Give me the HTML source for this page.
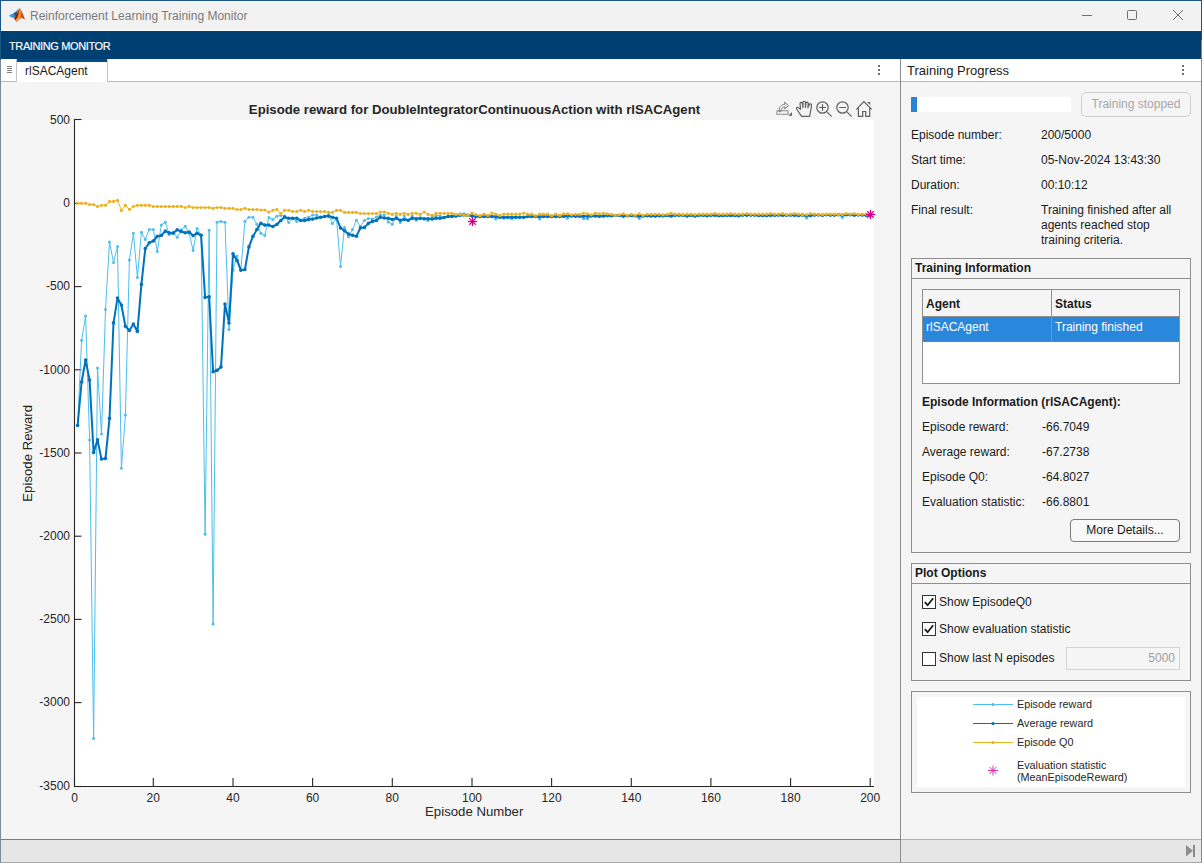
<!DOCTYPE html>
<html><head><meta charset="utf-8">
<style>
*{box-sizing:border-box;margin:0;padding:0}
html,body{width:1202px;height:863px;overflow:hidden;background:#f5f5f5;font-family:"Liberation Sans",sans-serif;color:#212121}
.a{position:absolute}
.plot{position:absolute;left:0;top:0}
.lbl{position:absolute;font-size:12px;line-height:14px;white-space:nowrap;color:#1a1a1a}
</style></head><body>
<!-- window frame -->
<div class="a" style="left:0;top:0;width:1202px;height:863px;background:#f5f5f5"></div>
<!-- title bar -->
<div class="a" style="left:0;top:0;width:1202px;height:31px;background:#f2f2f3"></div>
<div class="a" style="left:0;top:0;width:1202px;height:1px;background:#1b5789"></div>
<div class="a" style="left:0;top:30px;width:1202px;height:1px;background:#ffffff"></div>
<svg class="a" style="left:4px;top:2px" width="26" height="26" viewBox="0 0 26 26">
  <path d="M5 13.4 L10 11 L14.8 6.4 L12.5 12.5 L10.2 16.3 L7.2 15.2 Z" fill="#3a92dc"/>
  <path d="M10 11.2 L13.2 9.8 L12.6 13.6 L10.4 13.4 Z" fill="#1f4f80"/>
  <path d="M15.7 6 L18.5 11 L20.9 17.6 L17.6 15.8 L12.4 20 L10.2 16.4 L12.8 11.8 Z" fill="#c0401c"/>
  <path d="M13 11.5 L15.5 7.2 L14.5 13 L11.5 17.8 L10.3 16.3 Z" fill="#8c2412"/>
  <path d="M15.6 6.4 L17.6 9.5 L17 15.2 L12.6 19.6 L14.2 13 Z" fill="#e98a2a"/>
  <path d="M17 15.2 L12.4 20 L12 17.5 L14.5 15.5 Z" fill="#f3b030"/>
  <path d="M17.6 9.5 L20.9 17.6 L18.2 15.6 Z" fill="#d4502a"/>
</svg>
<div class="a" style="left:30px;top:9px;font-size:12px;line-height:15px;color:#7a7a7a;white-space:nowrap">Reinforcement Learning Training Monitor</div>
<!-- window controls -->
<div class="a" style="left:1082px;top:15px;width:10px;height:1px;background:#6f6f6f"></div>
<div class="a" style="left:1127px;top:10px;width:10px;height:10px;border:1px solid #6f6f6f;border-radius:1.5px"></div>
<svg class="a" style="left:1172px;top:9px" width="12" height="12" viewBox="0 0 12 12"><path d="M1 1 L11 11 M11 1 L1 11" stroke="#6f6f6f" stroke-width="1"/></svg>
<!-- toolstrip -->
<div class="a" style="left:0;top:31px;width:1202px;height:28px;background:#003f72"></div>
<div class="a" style="left:9px;top:39.5px;font-size:11px;line-height:13px;color:#ffffff;white-space:nowrap;letter-spacing:-0.38px;-webkit-text-stroke:0.15px #ffffff">TRAINING MONITOR</div>
<!-- left border -->
<div class="a" style="left:0;top:0;width:1px;height:863px;background:#7a8c9c"></div>
<div class="a" style="left:0;top:0;width:1px;height:60px;background:#1b5789"></div>
<div class="a" style="left:1201px;top:0;width:1px;height:863px;background:#7a8a98"></div>
<div class="a" style="left:1201px;top:0;width:1px;height:40px;background:#1b5789"></div>

<!-- left tab bar -->
<div class="a" style="left:1px;top:59px;width:899px;height:23px;background:#ffffff;border-bottom:1px solid #b9b9b9"></div>
<div class="a" style="left:1px;top:59px;width:16px;height:23px;background:#ffffff;border-right:1px solid #c4c4c4;border-bottom:1px solid #b9b9b9"></div>
<div class="a" style="left:7px;top:66px;width:5px;height:1px;background:#808080;box-shadow:0 2px 0 #808080,0 4px 0 #808080,0 6px 0 #808080"></div>
<div class="a" style="left:17px;top:59px;width:90px;height:23px;background:#ffffff;border-top:3px solid #004b8a"></div>
<div class="a" style="left:107px;top:59px;width:1px;height:22px;background:#c4c4c4"></div>
<div class="a" style="left:25px;top:64px;font-size:12px;line-height:14px;color:#1a1a1a;white-space:nowrap">rlSACAgent</div>
<div class="a" style="left:878px;top:65px;width:2px;height:2px;background:#6e6e6e;box-shadow:0 4px 0 #6e6e6e,0 8px 0 #6e6e6e"></div>

<!-- plot content bg -->
<div class="a" style="left:1px;top:82px;width:899px;height:757px;background:#f5f5f5"></div>
<svg class="plot" width="1202" height="863" viewBox="0 0 1202 863">
<rect x="74" y="120" width="800" height="667" fill="#ffffff"/>
<g stroke="#262626" stroke-width="1.1" fill="none">
<line x1="74.5" y1="119.5" x2="74.5" y2="786.5"/>
<line x1="74" y1="786.5" x2="874" y2="786.5"/>
<line x1="74" y1="119.5" x2="81.5" y2="119.5"/><line x1="74" y1="203.4" x2="81.5" y2="203.4"/><line x1="74" y1="286.6" x2="81.5" y2="286.6"/><line x1="74" y1="369.8" x2="81.5" y2="369.8"/><line x1="74" y1="453.0" x2="81.5" y2="453.0"/><line x1="74" y1="536.2" x2="81.5" y2="536.2"/><line x1="74" y1="619.4" x2="81.5" y2="619.4"/><line x1="74" y1="702.6" x2="81.5" y2="702.6"/><line x1="74" y1="786.5" x2="81.5" y2="786.5"/><line x1="74.5" y1="786" x2="74.5" y2="778"/><line x1="153.3" y1="786" x2="153.3" y2="778"/><line x1="233.0" y1="786" x2="233.0" y2="778"/><line x1="312.6" y1="786" x2="312.6" y2="778"/><line x1="392.3" y1="786" x2="392.3" y2="778"/><line x1="472.0" y1="786" x2="472.0" y2="778"/><line x1="551.6" y1="786" x2="551.6" y2="778"/><line x1="631.3" y1="786" x2="631.3" y2="778"/><line x1="710.9" y1="786" x2="710.9" y2="778"/><line x1="790.6" y1="786" x2="790.6" y2="778"/><line x1="870.2" y1="786" x2="870.2" y2="778"/>
</g>

<polyline points="77.6,425.5 81.6,340.3 85.6,315.9 89.6,439.9 93.6,738.5 97.5,368.1 101.5,434.1 105.5,309.4 109.5,242.1 113.5,262.4 117.5,246.4 121.4,468.2 125.4,414.9 129.4,260.1 133.4,233.2 137.4,277.5 141.4,232.3 145.3,239.6 149.3,229.4 153.3,229.4 157.3,251.4 161.3,225.1 165.3,222.2 169.2,234.4 173.2,232.1 177.2,237.3 181.2,229.8 185.2,226.3 189.2,233.2 193.1,250.4 197.1,228.4 201.1,235.0 205.1,534.2 209.1,230.3 213.1,623.9 217.0,222.2 221.0,221.4 225.0,222.2 229.0,329.6 233.0,270.2 237.0,255.9 240.9,270.2 244.9,221.3 248.9,217.2 252.9,217.2 256.9,224.3 260.9,233.3 264.8,235.6 268.8,217.5 272.8,219.6 276.8,216.3 280.8,215.4 284.7,215.9 288.7,222.6 292.7,218.6 296.7,221.4 300.7,220.0 304.7,218.2 308.6,217.2 312.6,214.9 316.6,214.9 320.6,217.2 324.6,216.3 328.6,214.9 332.5,223.5 336.5,218.6 340.5,266.4 344.5,227.4 348.5,236.7 352.5,229.5 356.4,220.2 360.4,226.5 364.4,220.4 368.4,218.5 372.4,219.0 376.4,217.0 380.3,215.0 384.3,215.0 388.3,222.1 392.3,224.3 396.3,216.1 400.3,222.5 404.2,216.1 408.2,220.2 412.2,215.7 416.2,220.2 420.2,218.0 424.2,219.1 428.1,220.6 432.1,216.8 436.1,215.7 440.1,215.7 444.1,217.2 448.1,216.0 452.0,215.3 456.0,215.3 460.0,213.8 464.0,213.8 468.0,215.3 472.0,215.5 475.9,216.5 479.9,216.5 483.9,216.5 487.9,216.5 491.9,216.5 495.8,219.1 499.8,217.2 503.8,218.3 507.8,217.5 511.8,218.7 515.8,217.5 519.7,217.5 523.7,217.2 527.7,216.5 531.7,216.5 535.7,216.5 539.7,219.1 543.6,216.5 547.6,216.5 551.6,216.5 555.6,216.5 559.6,216.5 563.6,216.6 567.5,218.2 571.5,216.0 575.5,216.0 579.5,215.9 583.5,218.7 587.5,218.7 591.4,215.9 595.4,215.9 599.4,216.2 603.4,216.2 607.4,215.6 611.4,215.8 615.3,215.5 619.3,215.5 623.3,216.1 627.3,215.8 631.3,215.2 635.3,216.1 639.2,218.6 643.2,216.0 647.2,215.4 651.2,215.7 655.2,216.3 659.2,215.7 663.1,216.0 667.1,215.7 671.1,216.0 675.1,215.3 679.1,215.6 683.0,215.3 687.0,215.9 691.0,215.6 695.0,215.9 699.0,215.6 703.0,215.2 706.9,215.8 710.9,214.9 714.9,215.2 718.9,215.5 722.9,215.8 726.9,215.5 730.8,215.5 734.8,215.1 738.8,215.7 742.8,215.1 746.8,215.4 750.8,215.1 754.7,215.1 758.7,215.1 762.7,215.1 766.7,215.6 770.7,215.3 774.7,215.0 778.6,214.7 782.6,215.3 786.6,215.3 790.6,215.0 794.6,215.2 798.6,215.5 802.5,214.9 806.5,218.0 810.5,215.5 814.5,215.2 818.5,214.6 822.5,215.2 826.4,214.8 830.4,215.1 834.4,215.1 838.4,214.8 842.4,217.6 846.4,214.5 850.3,214.8 854.3,215.4 858.3,214.7 862.3,215.0 866.3,215.3 870.2,215.0" fill="none" stroke="#4DBEEE" stroke-width="1" stroke-linejoin="round"/>
<g fill="#4DBEEE"><circle cx="77.6" cy="425.5" r="1.5"/><circle cx="81.6" cy="340.3" r="1.5"/><circle cx="85.6" cy="315.9" r="1.5"/><circle cx="89.6" cy="439.9" r="1.5"/><circle cx="93.6" cy="738.5" r="1.5"/><circle cx="97.5" cy="368.1" r="1.5"/><circle cx="101.5" cy="434.1" r="1.5"/><circle cx="105.5" cy="309.4" r="1.5"/><circle cx="109.5" cy="242.1" r="1.5"/><circle cx="113.5" cy="262.4" r="1.5"/><circle cx="117.5" cy="246.4" r="1.5"/><circle cx="121.4" cy="468.2" r="1.5"/><circle cx="125.4" cy="414.9" r="1.5"/><circle cx="129.4" cy="260.1" r="1.5"/><circle cx="133.4" cy="233.2" r="1.5"/><circle cx="137.4" cy="277.5" r="1.5"/><circle cx="141.4" cy="232.3" r="1.5"/><circle cx="145.3" cy="239.6" r="1.5"/><circle cx="149.3" cy="229.4" r="1.5"/><circle cx="153.3" cy="229.4" r="1.5"/><circle cx="157.3" cy="251.4" r="1.5"/><circle cx="161.3" cy="225.1" r="1.5"/><circle cx="165.3" cy="222.2" r="1.5"/><circle cx="169.2" cy="234.4" r="1.5"/><circle cx="173.2" cy="232.1" r="1.5"/><circle cx="177.2" cy="237.3" r="1.5"/><circle cx="181.2" cy="229.8" r="1.5"/><circle cx="185.2" cy="226.3" r="1.5"/><circle cx="189.2" cy="233.2" r="1.5"/><circle cx="193.1" cy="250.4" r="1.5"/><circle cx="197.1" cy="228.4" r="1.5"/><circle cx="201.1" cy="235.0" r="1.5"/><circle cx="205.1" cy="534.2" r="1.5"/><circle cx="209.1" cy="230.3" r="1.5"/><circle cx="213.1" cy="623.9" r="1.5"/><circle cx="217.0" cy="222.2" r="1.5"/><circle cx="221.0" cy="221.4" r="1.5"/><circle cx="225.0" cy="222.2" r="1.5"/><circle cx="229.0" cy="329.6" r="1.5"/><circle cx="233.0" cy="270.2" r="1.5"/><circle cx="237.0" cy="255.9" r="1.5"/><circle cx="240.9" cy="270.2" r="1.5"/><circle cx="244.9" cy="221.3" r="1.5"/><circle cx="248.9" cy="217.2" r="1.5"/><circle cx="252.9" cy="217.2" r="1.5"/><circle cx="256.9" cy="224.3" r="1.5"/><circle cx="260.9" cy="233.3" r="1.5"/><circle cx="264.8" cy="235.6" r="1.5"/><circle cx="268.8" cy="217.5" r="1.5"/><circle cx="272.8" cy="219.6" r="1.5"/><circle cx="276.8" cy="216.3" r="1.5"/><circle cx="280.8" cy="215.4" r="1.5"/><circle cx="284.7" cy="215.9" r="1.5"/><circle cx="288.7" cy="222.6" r="1.5"/><circle cx="292.7" cy="218.6" r="1.5"/><circle cx="296.7" cy="221.4" r="1.5"/><circle cx="300.7" cy="220.0" r="1.5"/><circle cx="304.7" cy="218.2" r="1.5"/><circle cx="308.6" cy="217.2" r="1.5"/><circle cx="312.6" cy="214.9" r="1.5"/><circle cx="316.6" cy="214.9" r="1.5"/><circle cx="320.6" cy="217.2" r="1.5"/><circle cx="324.6" cy="216.3" r="1.5"/><circle cx="328.6" cy="214.9" r="1.5"/><circle cx="332.5" cy="223.5" r="1.5"/><circle cx="336.5" cy="218.6" r="1.5"/><circle cx="340.5" cy="266.4" r="1.5"/><circle cx="344.5" cy="227.4" r="1.5"/><circle cx="348.5" cy="236.7" r="1.5"/><circle cx="352.5" cy="229.5" r="1.5"/><circle cx="356.4" cy="220.2" r="1.5"/><circle cx="360.4" cy="226.5" r="1.5"/><circle cx="364.4" cy="220.4" r="1.5"/><circle cx="368.4" cy="218.5" r="1.5"/><circle cx="372.4" cy="219.0" r="1.5"/><circle cx="376.4" cy="217.0" r="1.5"/><circle cx="380.3" cy="215.0" r="1.5"/><circle cx="384.3" cy="215.0" r="1.5"/><circle cx="388.3" cy="222.1" r="1.5"/><circle cx="392.3" cy="224.3" r="1.5"/><circle cx="396.3" cy="216.1" r="1.5"/><circle cx="400.3" cy="222.5" r="1.5"/><circle cx="404.2" cy="216.1" r="1.5"/><circle cx="408.2" cy="220.2" r="1.5"/><circle cx="412.2" cy="215.7" r="1.5"/><circle cx="416.2" cy="220.2" r="1.5"/><circle cx="420.2" cy="218.0" r="1.5"/><circle cx="424.2" cy="219.1" r="1.5"/><circle cx="428.1" cy="220.6" r="1.5"/><circle cx="432.1" cy="216.8" r="1.5"/><circle cx="436.1" cy="215.7" r="1.5"/><circle cx="440.1" cy="215.7" r="1.5"/><circle cx="444.1" cy="217.2" r="1.5"/><circle cx="448.1" cy="216.0" r="1.5"/><circle cx="452.0" cy="215.3" r="1.5"/><circle cx="456.0" cy="215.3" r="1.5"/><circle cx="460.0" cy="213.8" r="1.5"/><circle cx="464.0" cy="213.8" r="1.5"/><circle cx="468.0" cy="215.3" r="1.5"/><circle cx="472.0" cy="215.5" r="1.5"/><circle cx="475.9" cy="216.5" r="1.5"/><circle cx="479.9" cy="216.5" r="1.5"/><circle cx="483.9" cy="216.5" r="1.5"/><circle cx="487.9" cy="216.5" r="1.5"/><circle cx="491.9" cy="216.5" r="1.5"/><circle cx="495.8" cy="219.1" r="1.5"/><circle cx="499.8" cy="217.2" r="1.5"/><circle cx="503.8" cy="218.3" r="1.5"/><circle cx="507.8" cy="217.5" r="1.5"/><circle cx="511.8" cy="218.7" r="1.5"/><circle cx="515.8" cy="217.5" r="1.5"/><circle cx="519.7" cy="217.5" r="1.5"/><circle cx="523.7" cy="217.2" r="1.5"/><circle cx="527.7" cy="216.5" r="1.5"/><circle cx="531.7" cy="216.5" r="1.5"/><circle cx="535.7" cy="216.5" r="1.5"/><circle cx="539.7" cy="219.1" r="1.5"/><circle cx="543.6" cy="216.5" r="1.5"/><circle cx="547.6" cy="216.5" r="1.5"/><circle cx="551.6" cy="216.5" r="1.5"/><circle cx="555.6" cy="216.5" r="1.5"/><circle cx="559.6" cy="216.5" r="1.5"/><circle cx="563.6" cy="216.6" r="1.5"/><circle cx="567.5" cy="218.2" r="1.5"/><circle cx="571.5" cy="216.0" r="1.5"/><circle cx="575.5" cy="216.0" r="1.5"/><circle cx="579.5" cy="215.9" r="1.5"/><circle cx="583.5" cy="218.7" r="1.5"/><circle cx="587.5" cy="218.7" r="1.5"/><circle cx="591.4" cy="215.9" r="1.5"/><circle cx="595.4" cy="215.9" r="1.5"/><circle cx="599.4" cy="216.2" r="1.5"/><circle cx="603.4" cy="216.2" r="1.5"/><circle cx="607.4" cy="215.6" r="1.5"/><circle cx="611.4" cy="215.8" r="1.5"/><circle cx="615.3" cy="215.5" r="1.5"/><circle cx="619.3" cy="215.5" r="1.5"/><circle cx="623.3" cy="216.1" r="1.5"/><circle cx="627.3" cy="215.8" r="1.5"/><circle cx="631.3" cy="215.2" r="1.5"/><circle cx="635.3" cy="216.1" r="1.5"/><circle cx="639.2" cy="218.6" r="1.5"/><circle cx="643.2" cy="216.0" r="1.5"/><circle cx="647.2" cy="215.4" r="1.5"/><circle cx="651.2" cy="215.7" r="1.5"/><circle cx="655.2" cy="216.3" r="1.5"/><circle cx="659.2" cy="215.7" r="1.5"/><circle cx="663.1" cy="216.0" r="1.5"/><circle cx="667.1" cy="215.7" r="1.5"/><circle cx="671.1" cy="216.0" r="1.5"/><circle cx="675.1" cy="215.3" r="1.5"/><circle cx="679.1" cy="215.6" r="1.5"/><circle cx="683.0" cy="215.3" r="1.5"/><circle cx="687.0" cy="215.9" r="1.5"/><circle cx="691.0" cy="215.6" r="1.5"/><circle cx="695.0" cy="215.9" r="1.5"/><circle cx="699.0" cy="215.6" r="1.5"/><circle cx="703.0" cy="215.2" r="1.5"/><circle cx="706.9" cy="215.8" r="1.5"/><circle cx="710.9" cy="214.9" r="1.5"/><circle cx="714.9" cy="215.2" r="1.5"/><circle cx="718.9" cy="215.5" r="1.5"/><circle cx="722.9" cy="215.8" r="1.5"/><circle cx="726.9" cy="215.5" r="1.5"/><circle cx="730.8" cy="215.5" r="1.5"/><circle cx="734.8" cy="215.1" r="1.5"/><circle cx="738.8" cy="215.7" r="1.5"/><circle cx="742.8" cy="215.1" r="1.5"/><circle cx="746.8" cy="215.4" r="1.5"/><circle cx="750.8" cy="215.1" r="1.5"/><circle cx="754.7" cy="215.1" r="1.5"/><circle cx="758.7" cy="215.1" r="1.5"/><circle cx="762.7" cy="215.1" r="1.5"/><circle cx="766.7" cy="215.6" r="1.5"/><circle cx="770.7" cy="215.3" r="1.5"/><circle cx="774.7" cy="215.0" r="1.5"/><circle cx="778.6" cy="214.7" r="1.5"/><circle cx="782.6" cy="215.3" r="1.5"/><circle cx="786.6" cy="215.3" r="1.5"/><circle cx="790.6" cy="215.0" r="1.5"/><circle cx="794.6" cy="215.2" r="1.5"/><circle cx="798.6" cy="215.5" r="1.5"/><circle cx="802.5" cy="214.9" r="1.5"/><circle cx="806.5" cy="218.0" r="1.5"/><circle cx="810.5" cy="215.5" r="1.5"/><circle cx="814.5" cy="215.2" r="1.5"/><circle cx="818.5" cy="214.6" r="1.5"/><circle cx="822.5" cy="215.2" r="1.5"/><circle cx="826.4" cy="214.8" r="1.5"/><circle cx="830.4" cy="215.1" r="1.5"/><circle cx="834.4" cy="215.1" r="1.5"/><circle cx="838.4" cy="214.8" r="1.5"/><circle cx="842.4" cy="217.6" r="1.5"/><circle cx="846.4" cy="214.5" r="1.5"/><circle cx="850.3" cy="214.8" r="1.5"/><circle cx="854.3" cy="215.4" r="1.5"/><circle cx="858.3" cy="214.7" r="1.5"/><circle cx="862.3" cy="215.0" r="1.5"/><circle cx="866.3" cy="215.3" r="1.5"/><circle cx="870.2" cy="215.0" r="1.5"/></g>
<polyline points="77.6,425.5 81.6,382.0 85.6,360.0 89.6,380.1 93.6,452.6 97.5,439.9 101.5,459.1 105.5,458.4 109.5,418.4 113.5,322.9 117.5,298.1 121.4,305.0 125.4,326.3 129.4,330.5 133.4,324.0 137.4,331.4 141.4,284.4 145.3,248.5 149.3,242.7 153.3,241.0 157.3,236.3 161.3,235.5 165.3,231.1 169.2,232.9 173.2,233.2 177.2,229.8 181.2,231.5 185.2,232.7 189.2,232.1 193.1,235.6 197.1,233.2 201.1,235.3 205.1,297.4 209.1,296.7 213.1,371.8 217.0,370.4 221.0,366.9 225.0,304.1 229.0,323.0 233.0,253.7 237.0,260.5 240.9,270.2 244.9,269.5 248.9,246.9 252.9,236.4 256.9,229.6 260.9,223.3 264.8,225.1 268.8,225.1 272.8,226.5 276.8,224.5 280.8,220.5 284.7,217.1 288.7,218.2 292.7,218.2 296.7,218.2 300.7,220.5 304.7,220.5 308.6,219.6 312.6,219.1 316.6,218.0 320.6,217.2 324.6,216.5 328.6,216.1 332.5,217.2 336.5,218.2 340.5,227.9 344.5,230.7 348.5,234.1 352.5,235.3 356.4,236.2 360.4,227.9 364.4,227.4 368.4,223.4 372.4,221.4 376.4,220.4 380.3,217.2 384.3,218.0 388.3,218.3 392.3,219.5 396.3,218.3 400.3,220.2 404.2,219.5 408.2,220.2 412.2,218.3 416.2,218.7 420.2,218.3 424.2,218.7 428.1,218.7 432.1,219.1 436.1,218.3 440.1,218.3 444.1,217.6 448.1,216.5 452.0,216.5 456.0,216.1 460.0,215.3 464.0,215.3 468.0,215.3 472.0,216.0 475.9,216.5 479.9,216.5 483.9,216.5 487.9,216.5 491.9,216.5 495.8,216.5 499.8,217.2 503.8,217.2 507.8,217.2 511.8,217.2 515.8,217.2 519.7,217.2 523.7,217.2 527.7,216.5 531.7,216.5 535.7,216.5 539.7,216.5 543.6,216.5 547.6,216.5 551.6,216.5 555.6,216.5 559.6,216.5 563.6,216.3 567.5,215.7 571.5,216.0 575.5,216.3 579.5,216.2 583.5,216.2 587.5,216.2 591.4,215.9 595.4,215.9 599.4,216.2 603.4,215.9 607.4,215.6 611.4,215.8 615.3,215.5 619.3,215.5 623.3,216.1 627.3,215.8 631.3,215.5 635.3,215.8 639.2,216.1 643.2,216.0 647.2,215.7 651.2,216.0 655.2,216.0 659.2,215.7 663.1,215.7 667.1,215.4 671.1,216.0 675.1,215.3 679.1,215.3 683.0,215.3 687.0,215.9 691.0,215.3 695.0,215.9 699.0,215.3 703.0,215.2 706.9,215.8 710.9,215.2 714.9,215.2 718.9,215.8 722.9,215.5 726.9,215.2 730.8,215.5 734.8,215.4 738.8,215.7 742.8,215.1 746.8,215.1 750.8,215.1 754.7,215.1 758.7,215.4 762.7,215.4 766.7,215.6 770.7,215.3 774.7,215.3 778.6,215.0 782.6,215.3 786.6,215.3 790.6,215.0 794.6,215.2 798.6,215.5 802.5,214.9 806.5,215.5 810.5,215.5 814.5,214.9 818.5,214.9 822.5,215.2 826.4,214.8 830.4,215.1 834.4,215.1 838.4,214.8 842.4,215.1 846.4,214.8 850.3,214.8 854.3,215.1 858.3,215.0 862.3,215.0 866.3,215.3 870.2,215.3" fill="none" stroke="#0072BD" stroke-width="2" stroke-linejoin="round"/>
<g fill="#0072BD"><circle cx="77.6" cy="425.5" r="1.8"/><circle cx="81.6" cy="382.0" r="1.8"/><circle cx="85.6" cy="360.0" r="1.8"/><circle cx="89.6" cy="380.1" r="1.8"/><circle cx="93.6" cy="452.6" r="1.8"/><circle cx="97.5" cy="439.9" r="1.8"/><circle cx="101.5" cy="459.1" r="1.8"/><circle cx="105.5" cy="458.4" r="1.8"/><circle cx="109.5" cy="418.4" r="1.8"/><circle cx="113.5" cy="322.9" r="1.8"/><circle cx="117.5" cy="298.1" r="1.8"/><circle cx="121.4" cy="305.0" r="1.8"/><circle cx="125.4" cy="326.3" r="1.8"/><circle cx="129.4" cy="330.5" r="1.8"/><circle cx="133.4" cy="324.0" r="1.8"/><circle cx="137.4" cy="331.4" r="1.8"/><circle cx="141.4" cy="284.4" r="1.8"/><circle cx="145.3" cy="248.5" r="1.8"/><circle cx="149.3" cy="242.7" r="1.8"/><circle cx="153.3" cy="241.0" r="1.8"/><circle cx="157.3" cy="236.3" r="1.8"/><circle cx="161.3" cy="235.5" r="1.8"/><circle cx="165.3" cy="231.1" r="1.8"/><circle cx="169.2" cy="232.9" r="1.8"/><circle cx="173.2" cy="233.2" r="1.8"/><circle cx="177.2" cy="229.8" r="1.8"/><circle cx="181.2" cy="231.5" r="1.8"/><circle cx="185.2" cy="232.7" r="1.8"/><circle cx="189.2" cy="232.1" r="1.8"/><circle cx="193.1" cy="235.6" r="1.8"/><circle cx="197.1" cy="233.2" r="1.8"/><circle cx="201.1" cy="235.3" r="1.8"/><circle cx="205.1" cy="297.4" r="1.8"/><circle cx="209.1" cy="296.7" r="1.8"/><circle cx="213.1" cy="371.8" r="1.8"/><circle cx="217.0" cy="370.4" r="1.8"/><circle cx="221.0" cy="366.9" r="1.8"/><circle cx="225.0" cy="304.1" r="1.8"/><circle cx="229.0" cy="323.0" r="1.8"/><circle cx="233.0" cy="253.7" r="1.8"/><circle cx="237.0" cy="260.5" r="1.8"/><circle cx="240.9" cy="270.2" r="1.8"/><circle cx="244.9" cy="269.5" r="1.8"/><circle cx="248.9" cy="246.9" r="1.8"/><circle cx="252.9" cy="236.4" r="1.8"/><circle cx="256.9" cy="229.6" r="1.8"/><circle cx="260.9" cy="223.3" r="1.8"/><circle cx="264.8" cy="225.1" r="1.8"/><circle cx="268.8" cy="225.1" r="1.8"/><circle cx="272.8" cy="226.5" r="1.8"/><circle cx="276.8" cy="224.5" r="1.8"/><circle cx="280.8" cy="220.5" r="1.8"/><circle cx="284.7" cy="217.1" r="1.8"/><circle cx="288.7" cy="218.2" r="1.8"/><circle cx="292.7" cy="218.2" r="1.8"/><circle cx="296.7" cy="218.2" r="1.8"/><circle cx="300.7" cy="220.5" r="1.8"/><circle cx="304.7" cy="220.5" r="1.8"/><circle cx="308.6" cy="219.6" r="1.8"/><circle cx="312.6" cy="219.1" r="1.8"/><circle cx="316.6" cy="218.0" r="1.8"/><circle cx="320.6" cy="217.2" r="1.8"/><circle cx="324.6" cy="216.5" r="1.8"/><circle cx="328.6" cy="216.1" r="1.8"/><circle cx="332.5" cy="217.2" r="1.8"/><circle cx="336.5" cy="218.2" r="1.8"/><circle cx="340.5" cy="227.9" r="1.8"/><circle cx="344.5" cy="230.7" r="1.8"/><circle cx="348.5" cy="234.1" r="1.8"/><circle cx="352.5" cy="235.3" r="1.8"/><circle cx="356.4" cy="236.2" r="1.8"/><circle cx="360.4" cy="227.9" r="1.8"/><circle cx="364.4" cy="227.4" r="1.8"/><circle cx="368.4" cy="223.4" r="1.8"/><circle cx="372.4" cy="221.4" r="1.8"/><circle cx="376.4" cy="220.4" r="1.8"/><circle cx="380.3" cy="217.2" r="1.8"/><circle cx="384.3" cy="218.0" r="1.8"/><circle cx="388.3" cy="218.3" r="1.8"/><circle cx="392.3" cy="219.5" r="1.8"/><circle cx="396.3" cy="218.3" r="1.8"/><circle cx="400.3" cy="220.2" r="1.8"/><circle cx="404.2" cy="219.5" r="1.8"/><circle cx="408.2" cy="220.2" r="1.8"/><circle cx="412.2" cy="218.3" r="1.8"/><circle cx="416.2" cy="218.7" r="1.8"/><circle cx="420.2" cy="218.3" r="1.8"/><circle cx="424.2" cy="218.7" r="1.8"/><circle cx="428.1" cy="218.7" r="1.8"/><circle cx="432.1" cy="219.1" r="1.8"/><circle cx="436.1" cy="218.3" r="1.8"/><circle cx="440.1" cy="218.3" r="1.8"/><circle cx="444.1" cy="217.6" r="1.8"/><circle cx="448.1" cy="216.5" r="1.8"/><circle cx="452.0" cy="216.5" r="1.8"/><circle cx="456.0" cy="216.1" r="1.8"/><circle cx="460.0" cy="215.3" r="1.8"/><circle cx="464.0" cy="215.3" r="1.8"/><circle cx="468.0" cy="215.3" r="1.8"/><circle cx="472.0" cy="216.0" r="1.8"/><circle cx="475.9" cy="216.5" r="1.8"/><circle cx="479.9" cy="216.5" r="1.8"/><circle cx="483.9" cy="216.5" r="1.8"/><circle cx="487.9" cy="216.5" r="1.8"/><circle cx="491.9" cy="216.5" r="1.8"/><circle cx="495.8" cy="216.5" r="1.8"/><circle cx="499.8" cy="217.2" r="1.8"/><circle cx="503.8" cy="217.2" r="1.8"/><circle cx="507.8" cy="217.2" r="1.8"/><circle cx="511.8" cy="217.2" r="1.8"/><circle cx="515.8" cy="217.2" r="1.8"/><circle cx="519.7" cy="217.2" r="1.8"/><circle cx="523.7" cy="217.2" r="1.8"/><circle cx="527.7" cy="216.5" r="1.8"/><circle cx="531.7" cy="216.5" r="1.8"/><circle cx="535.7" cy="216.5" r="1.8"/><circle cx="539.7" cy="216.5" r="1.8"/><circle cx="543.6" cy="216.5" r="1.8"/><circle cx="547.6" cy="216.5" r="1.8"/><circle cx="551.6" cy="216.5" r="1.8"/><circle cx="555.6" cy="216.5" r="1.8"/><circle cx="559.6" cy="216.5" r="1.8"/><circle cx="563.6" cy="216.3" r="1.8"/><circle cx="567.5" cy="215.7" r="1.8"/><circle cx="571.5" cy="216.0" r="1.8"/><circle cx="575.5" cy="216.3" r="1.8"/><circle cx="579.5" cy="216.2" r="1.8"/><circle cx="583.5" cy="216.2" r="1.8"/><circle cx="587.5" cy="216.2" r="1.8"/><circle cx="591.4" cy="215.9" r="1.8"/><circle cx="595.4" cy="215.9" r="1.8"/><circle cx="599.4" cy="216.2" r="1.8"/><circle cx="603.4" cy="215.9" r="1.8"/><circle cx="607.4" cy="215.6" r="1.8"/><circle cx="611.4" cy="215.8" r="1.8"/><circle cx="615.3" cy="215.5" r="1.8"/><circle cx="619.3" cy="215.5" r="1.8"/><circle cx="623.3" cy="216.1" r="1.8"/><circle cx="627.3" cy="215.8" r="1.8"/><circle cx="631.3" cy="215.5" r="1.8"/><circle cx="635.3" cy="215.8" r="1.8"/><circle cx="639.2" cy="216.1" r="1.8"/><circle cx="643.2" cy="216.0" r="1.8"/><circle cx="647.2" cy="215.7" r="1.8"/><circle cx="651.2" cy="216.0" r="1.8"/><circle cx="655.2" cy="216.0" r="1.8"/><circle cx="659.2" cy="215.7" r="1.8"/><circle cx="663.1" cy="215.7" r="1.8"/><circle cx="667.1" cy="215.4" r="1.8"/><circle cx="671.1" cy="216.0" r="1.8"/><circle cx="675.1" cy="215.3" r="1.8"/><circle cx="679.1" cy="215.3" r="1.8"/><circle cx="683.0" cy="215.3" r="1.8"/><circle cx="687.0" cy="215.9" r="1.8"/><circle cx="691.0" cy="215.3" r="1.8"/><circle cx="695.0" cy="215.9" r="1.8"/><circle cx="699.0" cy="215.3" r="1.8"/><circle cx="703.0" cy="215.2" r="1.8"/><circle cx="706.9" cy="215.8" r="1.8"/><circle cx="710.9" cy="215.2" r="1.8"/><circle cx="714.9" cy="215.2" r="1.8"/><circle cx="718.9" cy="215.8" r="1.8"/><circle cx="722.9" cy="215.5" r="1.8"/><circle cx="726.9" cy="215.2" r="1.8"/><circle cx="730.8" cy="215.5" r="1.8"/><circle cx="734.8" cy="215.4" r="1.8"/><circle cx="738.8" cy="215.7" r="1.8"/><circle cx="742.8" cy="215.1" r="1.8"/><circle cx="746.8" cy="215.1" r="1.8"/><circle cx="750.8" cy="215.1" r="1.8"/><circle cx="754.7" cy="215.1" r="1.8"/><circle cx="758.7" cy="215.4" r="1.8"/><circle cx="762.7" cy="215.4" r="1.8"/><circle cx="766.7" cy="215.6" r="1.8"/><circle cx="770.7" cy="215.3" r="1.8"/><circle cx="774.7" cy="215.3" r="1.8"/><circle cx="778.6" cy="215.0" r="1.8"/><circle cx="782.6" cy="215.3" r="1.8"/><circle cx="786.6" cy="215.3" r="1.8"/><circle cx="790.6" cy="215.0" r="1.8"/><circle cx="794.6" cy="215.2" r="1.8"/><circle cx="798.6" cy="215.5" r="1.8"/><circle cx="802.5" cy="214.9" r="1.8"/><circle cx="806.5" cy="215.5" r="1.8"/><circle cx="810.5" cy="215.5" r="1.8"/><circle cx="814.5" cy="214.9" r="1.8"/><circle cx="818.5" cy="214.9" r="1.8"/><circle cx="822.5" cy="215.2" r="1.8"/><circle cx="826.4" cy="214.8" r="1.8"/><circle cx="830.4" cy="215.1" r="1.8"/><circle cx="834.4" cy="215.1" r="1.8"/><circle cx="838.4" cy="214.8" r="1.8"/><circle cx="842.4" cy="215.1" r="1.8"/><circle cx="846.4" cy="214.8" r="1.8"/><circle cx="850.3" cy="214.8" r="1.8"/><circle cx="854.3" cy="215.1" r="1.8"/><circle cx="858.3" cy="215.0" r="1.8"/><circle cx="862.3" cy="215.0" r="1.8"/><circle cx="866.3" cy="215.3" r="1.8"/><circle cx="870.2" cy="215.3" r="1.8"/></g>
<g fill="none" stroke-linejoin="round">
<polyline points="77.6,203.3 81.6,203.3 85.6,203.3 89.6,204.5 93.6,204.5 97.5,206.5 101.5,205.3 105.5,205.3 109.5,201.4 113.5,201.4 117.5,200.4 121.4,210.5 125.4,205.3 129.4,209.5 133.4,206.5 137.4,205.3 141.4,205.3 145.3,205.3 149.3,205.3 153.3,206.5 157.3,206.5 161.3,206.5 165.3,206.5 169.2,206.5 173.2,206.4 177.2,206.4 181.2,206.4 185.2,207.5 189.2,206.4 193.1,207.5 197.1,207.5 201.1,207.5 205.1,207.5 209.1,207.5 213.1,208.3 217.0,207.5 221.0,207.5 225.0,208.3 229.0,208.3 233.0,208.3 237.0,209.5 240.9,209.5 244.9,208.3 248.9,209.5 252.9,209.5 256.9,209.5 260.9,210.0 264.8,210.0 268.8,212.1 272.8,210.3 276.8,209.4 280.8,213.5 284.7,210.3 288.7,210.3 292.7,211.5 296.7,211.5 300.7,210.3 304.7,211.5 308.6,210.3 312.6,211.5 316.6,211.5 320.6,211.5 324.6,211.5 328.6,212.4 332.5,212.4 336.5,210.3 340.5,210.3 344.5,212.4 348.5,212.4 352.5,212.4 356.4,212.4 360.4,213.5 364.4,213.5 368.4,213.6 372.4,213.6 376.4,213.6 380.3,212.0 384.3,212.0 388.3,213.3 392.3,214.4 396.3,213.3 400.3,214.4 404.2,213.3 408.2,214.4 412.2,213.3 416.2,213.3 420.2,214.4 424.2,212.0 428.1,214.4 432.1,215.3 436.1,213.3 440.1,213.3 444.1,213.3 448.1,213.3 452.0,213.3 456.0,214.4 460.0,214.4 464.0,215.3 468.0,215.3 472.0,213.1 475.9,214.6 479.9,215.7 483.9,214.2 487.9,215.4 491.9,213.1 495.8,214.2 499.8,215.4 503.8,214.2 507.8,214.2 511.8,214.2 515.8,214.2 519.7,214.2 523.7,213.1 527.7,214.2 531.7,214.2 535.7,215.7 539.7,214.2 543.6,214.2 547.6,214.2 551.6,215.7 555.6,214.2 559.6,215.4 563.6,213.8 567.5,213.8 571.5,214.8 575.5,214.3 579.5,214.3 583.5,213.3 587.5,213.8 591.4,214.8 595.4,213.3 599.4,213.8 603.4,213.3 607.4,213.8 611.4,214.3 615.3,215.3 619.3,214.8 623.3,213.8 627.3,215.3 631.3,214.3 635.3,215.3 639.2,213.8 643.2,215.3 647.2,214.3 651.2,214.3 655.2,214.3 659.2,214.3 663.1,214.8 667.1,214.3 671.1,213.3 675.1,214.2 679.1,214.2 683.0,214.7 687.0,214.2 691.0,214.2 695.0,214.7 699.0,214.2 703.0,214.2 706.9,214.2 710.9,214.2 714.9,213.6 718.9,214.2 722.9,214.2 726.9,214.2 730.8,213.6 734.8,214.2 738.8,214.2 742.8,214.2 746.8,213.6 750.8,214.2 754.7,214.2 758.7,214.2 762.7,214.2 766.7,214.2 770.7,213.6 774.7,214.2 778.6,214.2 782.6,213.6 786.6,214.7 790.6,214.2 794.6,213.6 798.6,214.2 802.5,214.7 806.5,214.7 810.5,213.6 814.5,214.2 818.5,214.7 822.5,214.7 826.4,214.2 830.4,214.2 834.4,214.2 838.4,214.7 842.4,214.7 846.4,213.6 850.3,214.2 854.3,213.6 858.3,214.7 862.3,214.2 866.3,214.2 870.2,214.7" stroke="#EDB120" stroke-width="1"/>
</g>
<g fill="#EDB120"><circle cx="77.6" cy="203.3" r="1.6"/><circle cx="81.6" cy="203.3" r="1.6"/><circle cx="85.6" cy="203.3" r="1.6"/><circle cx="89.6" cy="204.5" r="1.6"/><circle cx="93.6" cy="204.5" r="1.6"/><circle cx="97.5" cy="206.5" r="1.6"/><circle cx="101.5" cy="205.3" r="1.6"/><circle cx="105.5" cy="205.3" r="1.6"/><circle cx="109.5" cy="201.4" r="1.6"/><circle cx="113.5" cy="201.4" r="1.6"/><circle cx="117.5" cy="200.4" r="1.6"/><circle cx="121.4" cy="210.5" r="1.6"/><circle cx="125.4" cy="205.3" r="1.6"/><circle cx="129.4" cy="209.5" r="1.6"/><circle cx="133.4" cy="206.5" r="1.6"/><circle cx="137.4" cy="205.3" r="1.6"/><circle cx="141.4" cy="205.3" r="1.6"/><circle cx="145.3" cy="205.3" r="1.6"/><circle cx="149.3" cy="205.3" r="1.6"/><circle cx="153.3" cy="206.5" r="1.6"/><circle cx="157.3" cy="206.5" r="1.6"/><circle cx="161.3" cy="206.5" r="1.6"/><circle cx="165.3" cy="206.5" r="1.6"/><circle cx="169.2" cy="206.5" r="1.6"/><circle cx="173.2" cy="206.4" r="1.6"/><circle cx="177.2" cy="206.4" r="1.6"/><circle cx="181.2" cy="206.4" r="1.6"/><circle cx="185.2" cy="207.5" r="1.6"/><circle cx="189.2" cy="206.4" r="1.6"/><circle cx="193.1" cy="207.5" r="1.6"/><circle cx="197.1" cy="207.5" r="1.6"/><circle cx="201.1" cy="207.5" r="1.6"/><circle cx="205.1" cy="207.5" r="1.6"/><circle cx="209.1" cy="207.5" r="1.6"/><circle cx="213.1" cy="208.3" r="1.6"/><circle cx="217.0" cy="207.5" r="1.6"/><circle cx="221.0" cy="207.5" r="1.6"/><circle cx="225.0" cy="208.3" r="1.6"/><circle cx="229.0" cy="208.3" r="1.6"/><circle cx="233.0" cy="208.3" r="1.6"/><circle cx="237.0" cy="209.5" r="1.6"/><circle cx="240.9" cy="209.5" r="1.6"/><circle cx="244.9" cy="208.3" r="1.6"/><circle cx="248.9" cy="209.5" r="1.6"/><circle cx="252.9" cy="209.5" r="1.6"/><circle cx="256.9" cy="209.5" r="1.6"/><circle cx="260.9" cy="210.0" r="1.6"/><circle cx="264.8" cy="210.0" r="1.6"/><circle cx="268.8" cy="212.1" r="1.6"/><circle cx="272.8" cy="210.3" r="1.6"/><circle cx="276.8" cy="209.4" r="1.6"/><circle cx="280.8" cy="213.5" r="1.6"/><circle cx="284.7" cy="210.3" r="1.6"/><circle cx="288.7" cy="210.3" r="1.6"/><circle cx="292.7" cy="211.5" r="1.6"/><circle cx="296.7" cy="211.5" r="1.6"/><circle cx="300.7" cy="210.3" r="1.6"/><circle cx="304.7" cy="211.5" r="1.6"/><circle cx="308.6" cy="210.3" r="1.6"/><circle cx="312.6" cy="211.5" r="1.6"/><circle cx="316.6" cy="211.5" r="1.6"/><circle cx="320.6" cy="211.5" r="1.6"/><circle cx="324.6" cy="211.5" r="1.6"/><circle cx="328.6" cy="212.4" r="1.6"/><circle cx="332.5" cy="212.4" r="1.6"/><circle cx="336.5" cy="210.3" r="1.6"/><circle cx="340.5" cy="210.3" r="1.6"/><circle cx="344.5" cy="212.4" r="1.6"/><circle cx="348.5" cy="212.4" r="1.6"/><circle cx="352.5" cy="212.4" r="1.6"/><circle cx="356.4" cy="212.4" r="1.6"/><circle cx="360.4" cy="213.5" r="1.6"/><circle cx="364.4" cy="213.5" r="1.6"/><circle cx="368.4" cy="213.6" r="1.6"/><circle cx="372.4" cy="213.6" r="1.6"/><circle cx="376.4" cy="213.6" r="1.6"/><circle cx="380.3" cy="212.0" r="1.6"/><circle cx="384.3" cy="212.0" r="1.6"/><circle cx="388.3" cy="213.3" r="1.6"/><circle cx="392.3" cy="214.4" r="1.6"/><circle cx="396.3" cy="213.3" r="1.6"/><circle cx="400.3" cy="214.4" r="1.6"/><circle cx="404.2" cy="213.3" r="1.6"/><circle cx="408.2" cy="214.4" r="1.6"/><circle cx="412.2" cy="213.3" r="1.6"/><circle cx="416.2" cy="213.3" r="1.6"/><circle cx="420.2" cy="214.4" r="1.6"/><circle cx="424.2" cy="212.0" r="1.6"/><circle cx="428.1" cy="214.4" r="1.6"/><circle cx="432.1" cy="215.3" r="1.6"/><circle cx="436.1" cy="213.3" r="1.6"/><circle cx="440.1" cy="213.3" r="1.6"/><circle cx="444.1" cy="213.3" r="1.6"/><circle cx="448.1" cy="213.3" r="1.6"/><circle cx="452.0" cy="213.3" r="1.6"/><circle cx="456.0" cy="214.4" r="1.6"/><circle cx="460.0" cy="214.4" r="1.6"/><circle cx="464.0" cy="215.3" r="1.6"/><circle cx="468.0" cy="215.3" r="1.6"/><circle cx="472.0" cy="213.1" r="1.6"/><circle cx="475.9" cy="214.6" r="1.6"/><circle cx="479.9" cy="215.7" r="1.6"/><circle cx="483.9" cy="214.2" r="1.6"/><circle cx="487.9" cy="215.4" r="1.6"/><circle cx="491.9" cy="213.1" r="1.6"/><circle cx="495.8" cy="214.2" r="1.6"/><circle cx="499.8" cy="215.4" r="1.6"/><circle cx="503.8" cy="214.2" r="1.6"/><circle cx="507.8" cy="214.2" r="1.6"/><circle cx="511.8" cy="214.2" r="1.6"/><circle cx="515.8" cy="214.2" r="1.6"/><circle cx="519.7" cy="214.2" r="1.6"/><circle cx="523.7" cy="213.1" r="1.6"/><circle cx="527.7" cy="214.2" r="1.6"/><circle cx="531.7" cy="214.2" r="1.6"/><circle cx="535.7" cy="215.7" r="1.6"/><circle cx="539.7" cy="214.2" r="1.6"/><circle cx="543.6" cy="214.2" r="1.6"/><circle cx="547.6" cy="214.2" r="1.6"/><circle cx="551.6" cy="215.7" r="1.6"/><circle cx="555.6" cy="214.2" r="1.6"/><circle cx="559.6" cy="215.4" r="1.6"/><circle cx="563.6" cy="213.8" r="1.6"/><circle cx="567.5" cy="213.8" r="1.6"/><circle cx="571.5" cy="214.8" r="1.6"/><circle cx="575.5" cy="214.3" r="1.6"/><circle cx="579.5" cy="214.3" r="1.6"/><circle cx="583.5" cy="213.3" r="1.6"/><circle cx="587.5" cy="213.8" r="1.6"/><circle cx="591.4" cy="214.8" r="1.6"/><circle cx="595.4" cy="213.3" r="1.6"/><circle cx="599.4" cy="213.8" r="1.6"/><circle cx="603.4" cy="213.3" r="1.6"/><circle cx="607.4" cy="213.8" r="1.6"/><circle cx="611.4" cy="214.3" r="1.6"/><circle cx="615.3" cy="215.3" r="1.6"/><circle cx="619.3" cy="214.8" r="1.6"/><circle cx="623.3" cy="213.8" r="1.6"/><circle cx="627.3" cy="215.3" r="1.6"/><circle cx="631.3" cy="214.3" r="1.6"/><circle cx="635.3" cy="215.3" r="1.6"/><circle cx="639.2" cy="213.8" r="1.6"/><circle cx="643.2" cy="215.3" r="1.6"/><circle cx="647.2" cy="214.3" r="1.6"/><circle cx="651.2" cy="214.3" r="1.6"/><circle cx="655.2" cy="214.3" r="1.6"/><circle cx="659.2" cy="214.3" r="1.6"/><circle cx="663.1" cy="214.8" r="1.6"/><circle cx="667.1" cy="214.3" r="1.6"/><circle cx="671.1" cy="213.3" r="1.6"/><circle cx="675.1" cy="214.2" r="1.6"/><circle cx="679.1" cy="214.2" r="1.6"/><circle cx="683.0" cy="214.7" r="1.6"/><circle cx="687.0" cy="214.2" r="1.6"/><circle cx="691.0" cy="214.2" r="1.6"/><circle cx="695.0" cy="214.7" r="1.6"/><circle cx="699.0" cy="214.2" r="1.6"/><circle cx="703.0" cy="214.2" r="1.6"/><circle cx="706.9" cy="214.2" r="1.6"/><circle cx="710.9" cy="214.2" r="1.6"/><circle cx="714.9" cy="213.6" r="1.6"/><circle cx="718.9" cy="214.2" r="1.6"/><circle cx="722.9" cy="214.2" r="1.6"/><circle cx="726.9" cy="214.2" r="1.6"/><circle cx="730.8" cy="213.6" r="1.6"/><circle cx="734.8" cy="214.2" r="1.6"/><circle cx="738.8" cy="214.2" r="1.6"/><circle cx="742.8" cy="214.2" r="1.6"/><circle cx="746.8" cy="213.6" r="1.6"/><circle cx="750.8" cy="214.2" r="1.6"/><circle cx="754.7" cy="214.2" r="1.6"/><circle cx="758.7" cy="214.2" r="1.6"/><circle cx="762.7" cy="214.2" r="1.6"/><circle cx="766.7" cy="214.2" r="1.6"/><circle cx="770.7" cy="213.6" r="1.6"/><circle cx="774.7" cy="214.2" r="1.6"/><circle cx="778.6" cy="214.2" r="1.6"/><circle cx="782.6" cy="213.6" r="1.6"/><circle cx="786.6" cy="214.7" r="1.6"/><circle cx="790.6" cy="214.2" r="1.6"/><circle cx="794.6" cy="213.6" r="1.6"/><circle cx="798.6" cy="214.2" r="1.6"/><circle cx="802.5" cy="214.7" r="1.6"/><circle cx="806.5" cy="214.7" r="1.6"/><circle cx="810.5" cy="213.6" r="1.6"/><circle cx="814.5" cy="214.2" r="1.6"/><circle cx="818.5" cy="214.7" r="1.6"/><circle cx="822.5" cy="214.7" r="1.6"/><circle cx="826.4" cy="214.2" r="1.6"/><circle cx="830.4" cy="214.2" r="1.6"/><circle cx="834.4" cy="214.2" r="1.6"/><circle cx="838.4" cy="214.7" r="1.6"/><circle cx="842.4" cy="214.7" r="1.6"/><circle cx="846.4" cy="213.6" r="1.6"/><circle cx="850.3" cy="214.2" r="1.6"/><circle cx="854.3" cy="213.6" r="1.6"/><circle cx="858.3" cy="214.7" r="1.6"/><circle cx="862.3" cy="214.2" r="1.6"/><circle cx="866.3" cy="214.2" r="1.6"/><circle cx="870.2" cy="214.7" r="1.6"/></g>
<g stroke="#D0008C" stroke-width="1.3"><line x1="467.90" y1="221.50" x2="477.10" y2="221.50"/><line x1="469.25" y1="218.25" x2="475.75" y2="224.75"/><line x1="472.50" y1="216.90" x2="472.50" y2="226.10"/><line x1="475.75" y1="218.25" x2="469.25" y2="224.75"/></g>
<g stroke="#D0008C" stroke-width="1.3"><line x1="865.90" y1="214.50" x2="875.10" y2="214.50"/><line x1="867.25" y1="211.25" x2="873.75" y2="217.75"/><line x1="870.50" y1="209.90" x2="870.50" y2="219.10"/><line x1="873.75" y1="211.25" x2="867.25" y2="217.75"/></g>

<g font-family="Liberation Sans, sans-serif" font-size="12" fill="#262626"><text x="70" y="123.9" text-anchor="end">500</text><text x="70" y="207.1" text-anchor="end">0</text><text x="70" y="290.3" text-anchor="end">-500</text><text x="70" y="373.5" text-anchor="end">-1000</text><text x="70" y="456.7" text-anchor="end">-1500</text><text x="70" y="539.9" text-anchor="end">-2000</text><text x="70" y="623.1" text-anchor="end">-2500</text><text x="70" y="706.3" text-anchor="end">-3000</text><text x="70" y="789.5" text-anchor="end">-3500</text><text x="74.5" y="801.5" text-anchor="middle">0</text><text x="153.3" y="801.5" text-anchor="middle">20</text><text x="233.0" y="801.5" text-anchor="middle">40</text><text x="312.6" y="801.5" text-anchor="middle">60</text><text x="392.3" y="801.5" text-anchor="middle">80</text><text x="472.0" y="801.5" text-anchor="middle">100</text><text x="551.6" y="801.5" text-anchor="middle">120</text><text x="631.3" y="801.5" text-anchor="middle">140</text><text x="710.9" y="801.5" text-anchor="middle">160</text><text x="790.6" y="801.5" text-anchor="middle">180</text><text x="870.2" y="801.5" text-anchor="middle">200</text></g>
<text x="474.2" y="816" text-anchor="middle" font-family="Liberation Sans, sans-serif" font-size="13.2" fill="#262626">Episode Number</text>
<text transform="translate(32.4,453.3) rotate(-90)" text-anchor="middle" font-family="Liberation Sans, sans-serif" font-size="13.2" fill="#262626">Episode Reward</text>
<text x="474.5" y="114" text-anchor="middle" font-family="Liberation Sans, sans-serif" font-size="13.2" font-weight="bold" fill="#262626">Episode reward for DoubleIntegratorContinuousAction with rlSACAgent</text>
</svg>
<!-- axes toolbar icons -->
<svg class="a" style="left:774px;top:98px" width="100" height="22" viewBox="0 0 100 22" fill="none" stroke="#606060" stroke-width="1.2">
  <path d="M3 12.8 L14 12.8 L14 16.2 L2.8 16.2 Z" stroke="#8a8a8a" stroke-width="1.1" stroke-linejoin="round"/>
  <path d="M5.2 14 C4.5 9.5 7 6.5 10.8 6.3 L10.6 4.2 L14.5 7.7 L10.7 10.9 L10.8 8.8 C8.5 9 7.2 11 6.6 13.5 Z" stroke="#7a7a7a" stroke-width="1" stroke-linejoin="round"/>
  <path d="M14.3 17.7 L18 14 L18 17.7 Z" fill="#606060" stroke="none"/>
  <path d="M27.6 18.3 L22.6 11 C22 10 23 9 24 9.6 L26.7 11.3 L26 5.8 C25.8 4 28.2 3.8 28.4 5.6 L28.9 9.5 L28.9 4.5 C28.9 2.8 31.4 2.8 31.4 4.5 L31.4 9.5 L31.9 5.3 C32.1 3.6 34.4 3.8 34.2 5.5 L33.9 9.8 L35 6.8 C35.4 5.4 37.6 5.8 37.5 7.2 L37 11 L35.6 18.3 Z" stroke-linejoin="round"/>
  <circle cx="48.5" cy="9.5" r="5.7"/><path d="M53.2 14.2 L57.7 18.7 M45.2 9.5 L52 9.5 M48.5 6.2 L48.5 12.7"/>
  <circle cx="68.5" cy="9.5" r="5.7"/><path d="M73.2 14.2 L77.7 18.7 M65.2 9.5 L72 9.5"/>
  <path d="M82.4 11.4 L89.9 3.6 L97.7 11.4 M84.4 10 L84.4 18.4 L88.7 18.4 L88.7 13.5 L91.7 13.5 L91.7 18.4 L95.7 18.4 L95.7 10"/>
  <path d="M93 4 L96.2 4 L96.2 7 Z" fill="#606060" stroke="none"/>
</svg>

<!-- divider -->


<!-- right panel -->
<div class="a" style="left:901px;top:59px;width:300px;height:23px;background:#ffffff;border-bottom:1px solid #b9b9b9"></div>
<div class="a" style="left:907px;top:63px;font-size:13px;line-height:15px;color:#1a1a1a;white-space:nowrap">Training Progress</div>
<div class="a" style="left:1182px;top:65px;width:2px;height:2px;background:#6e6e6e;box-shadow:0 4px 0 #6e6e6e,0 8px 0 #6e6e6e"></div>

<div class="a" style="left:911px;top:97px;width:160px;height:15px;background:#ffffff"></div>
<div class="a" style="left:911px;top:97px;width:6px;height:15px;background:#2a84d6"></div>
<div class="a" style="left:1081px;top:92px;width:110px;height:25px;border:1px solid #cfcfcf;border-radius:5px;background:#f5f5f5;font-size:12px;line-height:23px;text-align:center;color:#a8a8a8;white-space:nowrap">Training stopped</div>

<div class="lbl" style="left:911px;top:128px">Episode number:</div>
<div class="lbl" style="left:1041px;top:128px">200/5000</div>
<div class="lbl" style="left:911px;top:153px">Start time:</div>
<div class="lbl" style="left:1041px;top:153px">05-Nov-2024 13:43:30</div>
<div class="lbl" style="left:911px;top:178px">Duration:</div>
<div class="lbl" style="left:1041px;top:178px">00:10:12</div>
<div class="lbl" style="left:911px;top:203px">Final result:</div>
<div class="lbl" style="left:1041px;top:203px;line-height:15px">Training finished after all<br>agents reached stop<br>training criteria.</div>

<!-- Training Information panel -->
<div class="a" style="left:911px;top:258px;width:280px;height:295px;border:1px solid #8f8f8f"></div>
<div class="a" style="left:912px;top:278px;width:278px;height:1px;background:#8f8f8f"></div>
<div class="a" style="left:915px;top:261px;font-size:12px;line-height:14px;font-weight:bold;color:#1a1a1a;white-space:nowrap">Training Information</div>
<div class="a" style="left:922px;top:289px;width:258px;height:95px;border:1px solid #8f8f8f;background:#ffffff"></div>
<div class="a" style="left:923px;top:290px;width:256px;height:27px;background:#f5f5f5;border-bottom:1px solid #8f8f8f"></div>
<div class="a" style="left:923px;top:317px;width:256px;height:25px;background:#2a88dc;border-bottom:1px solid #7f7f7f"></div>
<div class="a" style="left:1051px;top:290px;width:1px;height:52px;background:#8f8f8f"></div>
<div class="a" style="left:926px;top:297px;font-size:12px;line-height:14px;font-weight:bold;color:#1a1a1a">Agent</div>
<div class="a" style="left:1055px;top:297px;font-size:12px;line-height:14px;font-weight:bold;color:#1a1a1a">Status</div>
<div class="a" style="left:926px;top:320px;font-size:12px;line-height:14px;color:#ffffff">rlSACAgent</div>
<div class="a" style="left:1055px;top:320px;font-size:12px;line-height:14px;color:#ffffff">Training finished</div>

<div class="a" style="left:922px;top:395px;font-size:12px;line-height:14px;font-weight:bold;color:#1a1a1a;white-space:nowrap">Episode Information (rlSACAgent):</div>
<div class="lbl" style="left:922px;top:420px">Episode reward:</div>
<div class="lbl" style="left:1042px;top:420px">-66.7049</div>
<div class="lbl" style="left:922px;top:445px">Average reward:</div>
<div class="lbl" style="left:1042px;top:445px">-67.2738</div>
<div class="lbl" style="left:922px;top:470px">Episode Q0:</div>
<div class="lbl" style="left:1042px;top:470px">-64.8027</div>
<div class="lbl" style="left:922px;top:495px">Evaluation statistic:</div>
<div class="lbl" style="left:1042px;top:495px">-66.8801</div>
<div class="a" style="left:1070px;top:519px;width:110px;height:23px;border:1px solid #7a7a7a;border-radius:4px;background:#f8f8f8;font-size:12px;line-height:21px;text-align:center;color:#1a1a1a;white-space:nowrap">More Details...</div>

<!-- Plot Options -->
<div class="a" style="left:911px;top:563px;width:280px;height:118px;border:1px solid #8f8f8f"></div>
<div class="a" style="left:912px;top:583px;width:278px;height:1px;background:#8f8f8f"></div>
<div class="a" style="left:915px;top:566px;font-size:12px;line-height:14px;font-weight:bold;color:#1a1a1a;white-space:nowrap">Plot Options</div>
<div class="a" style="left:922px;top:595px;width:14px;height:14px;border:1px solid #333;background:#fff"></div>
<svg class="a" style="left:922px;top:595px" width="14" height="14" viewBox="0 0 14 14"><path d="M2.8 7.2 L5.6 10.2 L11.2 3.2" stroke="#1a1a1a" stroke-width="1.8" fill="none"/></svg>
<div class="lbl" style="left:939px;top:595px">Show EpisodeQ0</div>
<div class="a" style="left:922px;top:622px;width:14px;height:14px;border:1px solid #333;background:#fff"></div>
<svg class="a" style="left:922px;top:622px" width="14" height="14" viewBox="0 0 14 14"><path d="M2.8 7.2 L5.6 10.2 L11.2 3.2" stroke="#1a1a1a" stroke-width="1.8" fill="none"/></svg>
<div class="lbl" style="left:939px;top:622px">Show evaluation statistic</div>
<div class="a" style="left:922px;top:652px;width:14px;height:14px;border:1px solid #333;background:#fff"></div>
<div class="lbl" style="left:939px;top:651px">Show last N episodes</div>
<div class="a" style="left:1066px;top:647px;width:114px;height:23px;border:1px solid #d4d4d4;background:#f5f5f5;font-size:12px;line-height:21px;text-align:right;padding-right:4px;color:#a0a0a0">5000</div>

<!-- Legend -->
<div class="a" style="left:911px;top:691px;width:280px;height:102px;border:1px solid #8f8f8f"></div>
<div class="a" style="left:917px;top:697px;width:268px;height:90px;background:#ffffff"></div>
<svg class="a" style="left:960px;top:695px" width="70" height="90" viewBox="0 0 70 90">
  <line x1="13" y1="9.5" x2="53" y2="9.5" stroke="#4DBEEE" stroke-width="1"/><circle cx="33" cy="9.5" r="1.6" fill="#4DBEEE"/>
  <line x1="13" y1="28.5" x2="53" y2="28.5" stroke="#0072BD" stroke-width="1"/><circle cx="33" cy="28.5" r="1.6" fill="#0072BD"/>
  <line x1="13" y1="47.5" x2="53" y2="47.5" stroke="#EDB120" stroke-width="1"/><circle cx="33" cy="47.5" r="1.6" fill="#EDB120"/>
  <g stroke="#CC1FA6" stroke-width="0.9"><line x1="28" y1="75.5" x2="38" y2="75.5"/><line x1="33" y1="70.5" x2="33" y2="80.5"/><line x1="29.5" y1="72" x2="36.5" y2="79"/><line x1="36.5" y1="72" x2="29.5" y2="79"/></g>
</svg>
<div class="a" style="left:1017px;top:698px;font-size:10.8px;line-height:13px;color:#262626;white-space:nowrap">Episode reward</div>
<div class="a" style="left:1017px;top:717px;font-size:10.8px;line-height:13px;color:#262626;white-space:nowrap">Average reward</div>
<div class="a" style="left:1017px;top:736px;font-size:10.8px;line-height:13px;color:#262626;white-space:nowrap">Episode Q0</div>
<div class="a" style="left:1017px;top:760px;font-size:10.8px;line-height:11.5px;color:#262626;white-space:nowrap">Evaluation statistic<br>(MeanEpisodeReward)</div>

<!-- status bar -->
<div class="a" style="left:1px;top:839px;width:1200px;height:24px;background:#e6e6e6"></div>
<div class="a" style="left:1px;top:839px;width:899px;height:1px;background:#7a7a7a"></div>
<div class="a" style="left:901px;top:839px;width:300px;height:1px;background:#b0b0b0"></div>
<div class="a" style="left:1px;top:862px;width:1200px;height:1px;background:#a8a8a8"></div>
<div class="a" style="left:900px;top:59px;width:1px;height:804px;background:#8c8c8c"></div>
<svg class="a" style="left:1184px;top:844px" width="12" height="14" viewBox="0 0 12 14"><path d="M2 1 L9 6.8 L2 12.6 Z" fill="#8f8f8f"/><rect x="9" y="1" width="2" height="12" fill="#8a8a8a"/></svg>
</body></html>
